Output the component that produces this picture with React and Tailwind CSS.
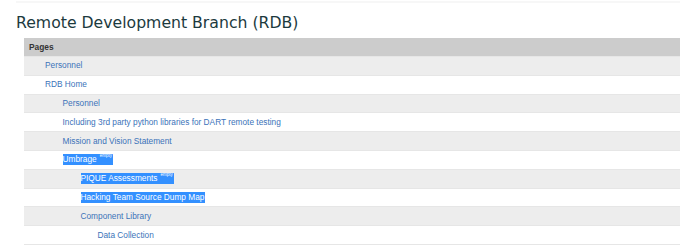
export default function App() {
  const rows = [
    { t: "Personnel", l: 1 },
    { t: "RDB Home", l: 1 },
    { t: "Personnel", l: 2 },
    { t: "Including 3rd party python libraries for DART remote testing", l: 2 },
    { t: "Mission and Vision Statement", l: 2 },
    { t: "Umbrage", l: 2, sel: true, empty: true },
    { t: "PIQUE Assessments", l: 3, sel: true, empty: true },
    { t: "Hacking Team Source Dump Map", l: 3, sel: true },
    { t: "Component Library", l: 3 },
    { t: "Data Collection", l: 4 },
  ];
  const pad = ["", "pl-[21px]", "pl-[38.5px]", "pl-[56.5px]", "pl-[73.5px]"];
  return (
    <div className="w-[680px] h-[245px] bg-white overflow-hidden">
      <div className="ml-[16px] mt-[1px] h-[2px] bg-[#f7f7f7]" />
      <h1 className="ml-[16px] mt-[8px] h-[24px] text-[15.7px] leading-[24px] text-[#1c3a3e] [font-family:'DejaVu_Sans',sans-serif]">
        Remote Development Branch (RDB)
      </h1>
      <div className="ml-[24px] mt-[3px] [font-family:'Liberation_Sans',Arial,sans-serif]">
        <div className="h-[18px] bg-[#cccccc] pl-[5px] flex items-center text-[8.4px] font-bold text-[#333]">
          Pages
        </div>
        {rows.map((r, i) => (
          <div
            key={i}
            className={`h-[18.8px] flex items-center border-t border-[#e6e6e6] text-[8.3px] ${pad[r.l]} ${
              i % 2 === 0 ? "bg-[#ededed]" : "bg-white"
            }`}
          >
            <span
              className={
                r.sel
                  ? "bg-[#3390ff] text-white leading-[11px] pr-[1px]"
                  : "text-[#3b73b9] leading-[11px]"
              }
            >
              {r.t}
              {r.empty && (
                <sup className="text-[4.5px] ml-[3px] align-[3px]">empty</sup>
              )}
            </span>
          </div>
        ))}
        <div className="border-t border-[#e6e6e6]" />
      </div>
    </div>
  );
}
